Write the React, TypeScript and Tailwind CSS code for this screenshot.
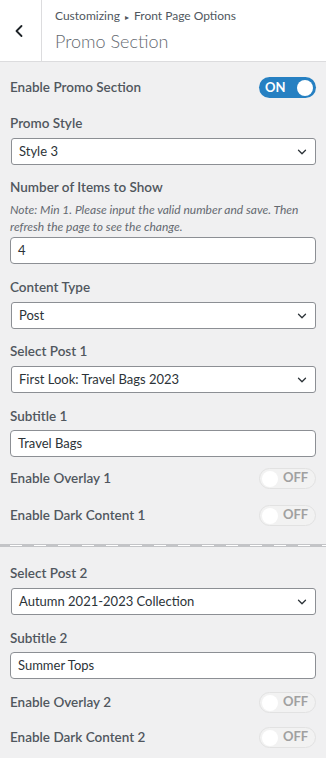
import { ChevronDown, ChevronLeft } from 'lucide-react';

// Customizer panel: Promo Section options
const font = { fontFamily: 'Lato, "Noto Sans", sans-serif' };

function Label({ children, className = '' }: { children: React.ReactNode; className?: string }) {
    return <div className={`h-5 text-[13.5px] leading-5 font-semibold text-[#50575e] ${className}`}>{children}</div>;
}

function Select({ value, className = '' }: { value: string; className?: string }) {
    return (
        <div className={`ml-px flex h-[27px] items-center justify-between rounded-[3px] border border-[#8c8f94] bg-white pr-[6px] pl-[7px] ${className}`}>
            <span className="text-[13px] text-[#2c3338]">{value}</span>
            <ChevronDown size={14} strokeWidth={2.2} className="text-[#2c3338]" />
        </div>
    );
}

function Input({ value, className = '' }: { value: string; className?: string }) {
    return (
        <div className={`flex h-[27px] items-center rounded-[4px] border border-[#8c8f94] bg-white px-[7px] ${className}`}>
            <span className="text-[13px] text-[#2c3338]">{value}</span>
        </div>
    );
}

function Toggle({ on }: { on: boolean }) {
    if (on) {
        return (
            <div className="flex h-[21px] w-[57px] items-center justify-between rounded-full bg-[#2680c2] pr-[3px] pl-[6px]">
                <span className="text-[13px] leading-none font-bold text-white">ON</span>
                <span className="h-[16px] w-[16px] rounded-full bg-white" />
            </div>
        );
    }
    return (
        <div className="flex h-[21px] w-[57px] items-center rounded-full border border-[#e2e2e2] bg-[#f2f2f2] pl-[2px]">
            <span className="h-[16px] w-[16px] rounded-full bg-white" />
            <span className="-mt-[3px] ml-[5px] text-[13px] leading-none font-bold text-[#a0a0a0]">OFF</span>
        </div>
    );
}

function ToggleRow({ label, on, className = '' }: { label: string; on: boolean; className?: string }) {
    return (
        <div className={`flex h-[21px] items-center justify-between ${className}`}>
            <span className="text-[13.5px] font-semibold text-[#50575e]">{label}</span>
            <Toggle on={on} />
        </div>
    );
}

export default function App() {
    return (
        <div className="min-h-[758px] w-[326px] bg-[#f0f0f1]" style={font}>
            {/* Header */}
            <div className="flex h-[62px] border-b border-[#dcdcde] bg-white">
                <div className="flex w-[42px] items-center justify-center border-r border-[#dcdcde]">
                    <ChevronLeft size={20} strokeWidth={2.2} className="-ml-[4px] text-[#1d2327]" />
                </div>
                <div className="pt-[6px] pl-[13px]">
                    <div className="text-[12px] leading-5 text-[#50575e]">
                        Customizing <span className="mx-[2px] text-[8px]">▸</span> Front Page Options
                    </div>
                    <div className="mt-[1px] text-[18px] leading-[26px] font-light text-[#646970]">Promo Section</div>
                </div>
            </div>

            <div className="px-[10px]">
                <ToggleRow label="Enable Promo Section" on className="mt-[15px]" />

                <Label className="mt-[15px]">Promo Style</Label>
                <Select value="Style 3" className="mt-[5px]" />

                <Label className="mt-[12px]">Number of Items to Show</Label>
                <div className="mt-[4px] text-[12px] leading-[17px] text-[#646970] italic">
                    Note: Min 1. Please input the valid number and save. Then refresh the page to see the change.
                </div>
                <Input value="4" className="mt-[2px]" />

                <Label className="mt-[13px]">Content Type</Label>
                <Select value="Post" className="mt-[5px]" />

                <Label className="mt-[12px]">Select Post 1</Label>
                <Select value="First Look: Travel Bags 2023" className="mt-[5px]" />

                <Label className="mt-[13px]">Subtitle 1</Label>
                <Input value="Travel Bags" className="mt-[4px]" />

                <ToggleRow label="Enable Overlay 1" on={false} className="mt-[11px]" />
                <ToggleRow label="Enable Dark Content 1" on={false} className="mt-[16px]" />
            </div>

            {/* Separator */}
            <div className="mt-[18px] h-[3px] border-y border-[#c3c4c7] bg-[repeating-linear-gradient(90deg,#c3c4c7_0_10px,#ffffff_10px_22px,#c3c4c7_22px_24px)]" />

            <div className="px-[10px] pb-4">
                <Label className="mt-[16px]">Select Post 2</Label>
                <Select value="Autumn 2021-2023 Collection" className="mt-[5px]" />

                <Label className="mt-[13px]">Subtitle 2</Label>
                <Input value="Summer Tops" className="mt-[4px]" />

                <ToggleRow label="Enable Overlay 2" on={false} className="mt-[13px]" />
                <ToggleRow label="Enable Dark Content 2" on={false} className="mt-[14px]" />
            </div>
        </div>
    );
}
